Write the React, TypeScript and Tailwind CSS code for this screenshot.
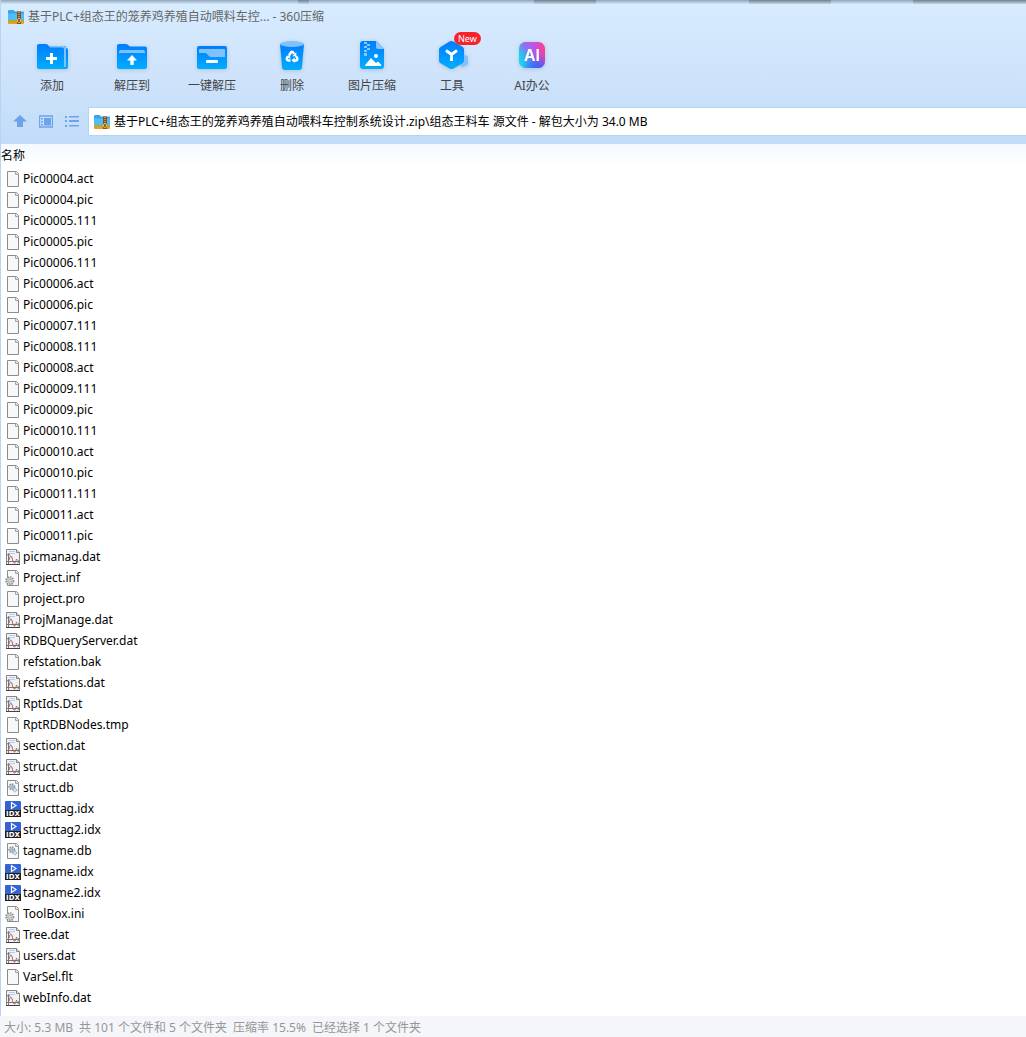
import { ReactNode, useState } from "react";

type FileKind = "blank" | "dat" | "conf" | "db" | "idx";

const files: { name: string; kind: FileKind }[] = [
  { name: "Pic00004.act", kind: "blank" },
  { name: "Pic00004.pic", kind: "blank" },
  { name: "Pic00005.111", kind: "blank" },
  { name: "Pic00005.pic", kind: "blank" },
  { name: "Pic00006.111", kind: "blank" },
  { name: "Pic00006.act", kind: "blank" },
  { name: "Pic00006.pic", kind: "blank" },
  { name: "Pic00007.111", kind: "blank" },
  { name: "Pic00008.111", kind: "blank" },
  { name: "Pic00008.act", kind: "blank" },
  { name: "Pic00009.111", kind: "blank" },
  { name: "Pic00009.pic", kind: "blank" },
  { name: "Pic00010.111", kind: "blank" },
  { name: "Pic00010.act", kind: "blank" },
  { name: "Pic00010.pic", kind: "blank" },
  { name: "Pic00011.111", kind: "blank" },
  { name: "Pic00011.act", kind: "blank" },
  { name: "Pic00011.pic", kind: "blank" },
  { name: "picmanag.dat", kind: "dat" },
  { name: "Project.inf", kind: "conf" },
  { name: "project.pro", kind: "blank" },
  { name: "ProjManage.dat", kind: "dat" },
  { name: "RDBQueryServer.dat", kind: "dat" },
  { name: "refstation.bak", kind: "blank" },
  { name: "refstations.dat", kind: "dat" },
  { name: "RptIds.Dat", kind: "dat" },
  { name: "RptRDBNodes.tmp", kind: "blank" },
  { name: "section.dat", kind: "dat" },
  { name: "struct.dat", kind: "dat" },
  { name: "struct.db", kind: "db" },
  { name: "structtag.idx", kind: "idx" },
  { name: "structtag2.idx", kind: "idx" },
  { name: "tagname.db", kind: "db" },
  { name: "tagname.idx", kind: "idx" },
  { name: "tagname2.idx", kind: "idx" },
  { name: "ToolBox.ini", kind: "conf" },
  { name: "Tree.dat", kind: "dat" },
  { name: "users.dat", kind: "dat" },
  { name: "VarSel.flt", kind: "blank" },
  { name: "webInfo.dat", kind: "dat" },
];

const Page = () => (
  <>
    <path d="M2.5 .5h9l2 2v13h-11z" fill="#f8f8f8" stroke="#8b8b8b" />
    <path d="M10.5 .5v3h3" fill="#ddd" stroke="#a5a5a5" />
  </>
);

const Gear = ({ cx, cy, r }: { cx: number; cy: number; r: number }) => (
  <>
    <circle cx={cx} cy={cy} r={r} fill="#e3e6e8" stroke="#8d9499" strokeWidth="1.6" strokeDasharray="1.6 .9" />
    <circle cx={cx} cy={cy} r={r - 1.2} fill="#dfe3e5" stroke="#9ba1a5" strokeWidth=".6" />
    <circle cx={cx} cy={cy} r={r / 3} fill="#fff" stroke="#858c90" strokeWidth=".7" />
  </>
);

const FileIcon = ({ kind }: { kind: FileKind }) => (
  <svg viewBox="0 0 16 16" className="h-4 w-4 shrink-0" aria-hidden="true">
    {kind === "blank" && <Page />}
    {kind === "dat" && (
      <>
        <path d="M1.5 .5h10l3 3v12h-13z" fill="#f1f2f4" stroke="#858585" />
        <path d="M11.5 .5v3h3" fill="#ddd" stroke="#858585" />
        <path d="M4 2.5h6M4 4.5h6" stroke="#b5cdf0" />
        <path d="M3.5 5v10M1.5 12.5h13M2 6.5l1.5-2 1.5 2M12.5 11l2 1.5-2 1.5" stroke="#777" fill="none" />
        <path d="M4 11C5 6 6.500 6 7.500 10.500S10.500 15.500 11.500 10" stroke="#a85a60" fill="none" />
        <path d="M1 15.500h14" stroke="#444" />
      </>
    )}
    {kind === "conf" && (
      <>
        <Page />
        <Gear cx={4.8} cy={10.8} r={3.8} />
      </>
    )}
    {kind === "db" && (
      <>
        <Page />
        <Gear cx={6.8} cy={6.8} r={2.7} />
        <circle cx="10" cy="10" r="1.800" fill="#cde5f3" stroke="#78abc9" strokeWidth="1" strokeDasharray="1.200 .6" />
      </>
    )}
    {kind === "idx" && (
      <>
        <rect width="16" height="16" rx="1" fill="#3464d4" />
        <path d="M6.500 1.500v6l4.500-3z" fill="#3464d4" stroke="#fff" strokeWidth="1.200" />
        <rect y="9" width="16" height="7" fill="#1c1c1c" />
        <text x="8" y="15" textAnchor="middle" fontSize="7" fontWeight="700" fill="#fff" fontFamily="DejaVu Sans, sans-serif">
          IDX
        </text>
      </>
    )}
  </svg>
);

const ZipIcon = () => (
  <svg viewBox="0 0 16 14" className="h-[14px] w-4 shrink-0" aria-hidden="true">
    <path d="M0 1q0-1 1-1h4.500l1.500 1.500h8q1 0 1 1V11H0z" fill="#36a5ec" />
    <path d="M0 3.500h16V10H0z" fill="#50bdf6" />
    <path d="M0 10h16v3q0 1-1 1H1q-1 0-1-1z" fill="#f39b1d" />
    <path d="M0 10.500h16v1H0z" fill="#6fbf3c" />
    <path d="M9 1.500h4V14H9z" fill="#84502a" />
    <path d="M11 2v7" stroke="#e6a74b" strokeWidth="1.400" strokeDasharray="1 1" />
    <rect x="9.700" y="8.700" width="2.600" height="3.600" rx=".6" fill="#6b3c1b" stroke="#ffd66b" />
  </svg>
);

const BlueGradient = ({ id }: { id: string }) => (
  <defs>
    <linearGradient id={id} x1="0" y1="0" x2="0" y2="1">
      <stop offset="0" stopColor="#007dff" />
      <stop offset="1" stopColor="#00adff" />
    </linearGradient>
  </defs>
);

const AddIcon = () => (
  <>
    <BlueGradient id="add" />
    <path d="M14 6h15q1 0 1 1v1q2 0 2 2v17q0 2-2 2H14z" fill="url(#add)" />
    <path d="M12 6h16q2 0 2 2v18q0 1-1 1h-3z" fill="#80c2ff" />
    <path d="M1 6q0-2 2-2h7q1 0 2 1l2 2.500h12q2 0 2 2V29H3q-2 0-2-2z" fill="url(#add)" />
    <path d="M14 13h3v4h4v3h-4v4h-3v-4h-4v-3h4z" fill="#fff" />
  </>
);

const ExtractIcon = () => (
  <>
    <BlueGradient id="extract" />
    <path d="M1 6q0-2 2-2h7q1 0 2 1l2 1.500h15q2 0 2 2V27q0 2-2 2H3q-2 0-2-2z" fill="url(#extract)" />
    <path d="M3 13v-1q0-2 2-2h22q2 0 2 2v1z" fill="#80c2ff" />
    <path d="M16 15l5 5.500h-3.300V25h-3.400v-4.500H11z" fill="#fff" />
  </>
);

const OneKeyIcon = () => (
  <>
    <BlueGradient id="onekey" />
    <rect x="1" y="6" width="30" height="23" rx="2" fill="url(#onekey)" />
    <path d="M3 10q0-1 1-1h24q1 0 1 1v7H15q-1 0-2-1l-3-3H3z" fill="#80c2ff" />
    <rect x="10" y="20" width="12" height="3" rx="1" fill="#fff" />
  </>
);

const DeleteIcon = () => (
  <>
    <BlueGradient id="trash" />
    <path d="M4 4h24l-2 23q0 3-3 3H9q-3 0-3-3z" fill="url(#trash)" />
    <ellipse cx="16" cy="4" rx="12" ry="3" fill="#80c2ff" />
    <g fill="none" stroke="#fff" strokeWidth="2.400">
      <path d="M13 15.500l2-3.200q1-1.200 2 0l1 1.600" />
      <path d="M20 16l1.300 2.300q.6 2-1.300 2.200h-2.500" />
      <path d="M14.500 20.500h-2.300q-2-.4-1.300-2.200l.9-1.600" />
    </g>
    <path d="M20.300 12v4.200h-4zM18.500 17.500v5.500l-3-2.700zM10 16l4-.8.3 3.800z" fill="#fff" />
  </>
);

const ImageZipIcon = () => (
  <>
    <BlueGradient id="imgzip" />
    <path d="M4 4q0-3 3-3h13l8 8v17q0 3-3 3H7q-3 0-3-3z" fill="url(#imgzip)" />
    <path d="M20 1l8 8h-6q-2 0-2-2z" fill="#8ac8ff" />
    <path d="M8 2h3v2H8zM11 4h3v2h-3zM8 6h3v2H8zM11 8h3v2h-3zM8 10h3v2H8zM8 13h3v3H8z" fill="#8ac8ff" />
    <circle cx="20" cy="16" r="2" fill="#fff" />
    <path d="M9 26q0-1 1-2l5-6 5 5 2-1.500 3 3q.6 1 0 1.500z" fill="#fff" />
  </>
);

const ToolsIcon = () => (
  <>
    <BlueGradient id="tools" />
    <path d="M27 14l5 2.500v8L27 27l-6-3z" fill="#80c2ff" />
    <path d="M15.500 1q1 0 2 .5l9 5.300q1.500 1 1.500 2.500v11.500q0 1.500-1.500 2.400l-9 5.300q-2 1-4 0l-9-5.300Q3 22.500 3 21V9.300Q3 8 4.500 7l9-5.500q1-.5 2-.5z" fill="url(#tools)" />
    <path d="M10 10.500l5.500 4 5.500-4M15.500 14.500V21" fill="none" stroke="#fff" strokeWidth="2.800" />
  </>
);

const AiIcon = () => (
  <>
    <defs>
      <linearGradient id="ai" x1="0" y1=".6" x2="1" y2=".3">
        <stop offset="0" stopColor="#14d8ef" />
        <stop offset=".35" stopColor="#5b91ee" />
        <stop offset=".65" stopColor="#c44de0" />
        <stop offset="1" stopColor="#fa4190" />
      </linearGradient>
      <radialGradient id="aiBlue" cx=".75" cy="1.1" r=".65">
        <stop offset="0" stopColor="#1d62ff" />
        <stop offset="1" stopColor="#1d62ff" stopOpacity="0" />
      </radialGradient>
      <radialGradient id="aiViolet" cx=".35" cy="0" r=".5">
        <stop offset="0" stopColor="#b45cf0" />
        <stop offset="1" stopColor="#b45cf0" stopOpacity="0" />
      </radialGradient>
    </defs>
    <rect x="3" y="2" width="26" height="26" rx="6.500" fill="url(#ai)" />
    <rect x="3" y="2" width="26" height="26" rx="6.500" fill="url(#aiBlue)" />
    <rect x="3" y="2" width="26" height="26" rx="6.500" fill="url(#aiViolet)" />
    <text x="16" y="21" textAnchor="middle" fontSize="16" fontWeight="700" fill="#fff" fontFamily="Liberation Sans, sans-serif">
      AI
    </text>
  </>
);

const tools: { label: string; icon: ReactNode; badge?: string }[] = [
  { label: "添加", icon: <AddIcon /> },
  { label: "解压到", icon: <ExtractIcon /> },
  { label: "一键解压", icon: <OneKeyIcon /> },
  { label: "删除", icon: <DeleteIcon /> },
  { label: "图片压缩", icon: <ImageZipIcon /> },
  { label: "工具", icon: <ToolsIcon />, badge: "New" },
  { label: "AI办公", icon: <AiIcon /> },
];

const App = () => {
  const [path, setPath] = useState(
    "基于PLC+组态王的笼养鸡养殖自动喂料车控制系统设计.zip\\组态王料车 源文件 - 解包大小为 34.0 MB"
  );

  return (
    <div className="flex min-h-screen flex-col bg-white font-['Noto_Sans','Noto_Sans_CJK_SC',sans-serif] text-xs text-black">
      <header className="border-l border-[#b9d4f2] bg-linear-to-b from-[#d7ecff] via-[#cfe4fb] to-[#c1dcf8]">
        {/* shadow of the windows behind the title bar */}
        <div className="flex h-1 bg-linear-to-b from-[#8fa4b8] to-[#d3e8fb]">
          <div className="w-[29%]" />
          <div className="w-[1%] bg-linear-to-b from-[#6f7f90] to-[#c3d8ea]" />
          <div className="w-[22%]" />
          <div className="w-[6%] bg-linear-to-b from-[#6f7f90] to-[#c3d8ea]" />
          <div className="w-[15%]" />
          <div className="w-[8%] bg-linear-to-b from-[#6f7f90] to-[#c3d8ea]" />
          <div className="w-[8%]" />
          <div className="flex-1 bg-linear-to-b from-[#6f7f90] to-[#c3d8ea]" />
        </div>
        <div className="flex h-[26px] items-center gap-1 pl-[7px] text-[#666]">
          <ZipIcon />
          <h1>基于PLC+组态王的笼养鸡养殖自动喂料车控... - 360压缩</h1>
        </div>

        <nav className="flex h-[77px] pt-[10px] pl-[11px]">
          {tools.map((tool) => (
            <button key={tool.label} className="flex h-14 w-20 flex-col items-center text-[#444]">
              <span className="relative">
                <svg viewBox="0 0 32 32" className="h-8 w-8 drop-shadow-sm" aria-hidden="true">
                  {tool.icon}
                </svg>
                {tool.badge && (
                  <span className="absolute -top-2 left-[18px] rounded-full bg-[#f8222c] px-1 text-[9px] leading-[13px] text-white">
                    {tool.badge}
                  </span>
                )}
              </span>
              <span className="mt-1 leading-5">{tool.label}</span>
            </button>
          ))}
        </nav>

        <div className="flex items-center pb-2 pl-3">
          <div className="flex gap-3 pr-[9px] text-[#6da3ea]">
            <button aria-label="向上">
              <svg viewBox="0 0 14 14" className="h-[14px] w-[14px]" fill="currentColor">
                <path d="M7 0l7 6.500h-4V12H4V6.500H0z" />
              </svg>
            </button>
            <button aria-label="预览">
              <svg viewBox="0 0 14 14" className="h-[14px] w-[14px]" fill="currentColor">
                <path d="M.5 1h13v11H.5z" fill="none" stroke="currentColor" strokeWidth="1.300" />
                <path d="M2 3h2v1.500H2zM2 6h2v1.500H2zM2 9h2v1.500H2zM5 3h7v7.500H5z" />
              </svg>
            </button>
            <button aria-label="列表">
              <svg viewBox="0 0 14 14" className="h-[14px] w-[14px]" fill="currentColor">
                <path d="M0 1h2v2H0zM0 5h2v2H0zM0 10h2v2H0zM4 1h10v1.500H4zM4 5h10v2H4zM4 10h10v1.500H4z" />
              </svg>
            </button>
          </div>
          <div className="flex h-[29px] flex-1 items-center gap-1 border border-r-0 border-[#b5d4f3] bg-white pl-[5px]">
            <ZipIcon />
            <input
              type="text"
              aria-label="路径"
              value={path}
              onChange={(e) => setPath(e.target.value)}
              className="min-w-0 flex-1 bg-transparent outline-none"
            />
          </div>
        </div>
      </header>

      <main className="flex-1 border-l border-[#b9d4f2] pb-2">
        <table className="w-full border-collapse text-left">
          <thead>
            <tr className="h-6 bg-linear-to-b from-[#f4f9ff] to-white">
              <th className="p-0 font-normal">名称</th>
            </tr>
          </thead>
          <tbody>
            {files.map((file) => (
              <tr key={file.name} className="h-[21px]">
                <td className="p-0 pl-1">
                  <div className="flex items-center gap-[2px] leading-5">
                    <FileIcon kind={file.kind} />
                    {file.name}
                  </div>
                </td>
              </tr>
            ))}
          </tbody>
        </table>
      </main>

      <footer className="flex gap-[6px] bg-[#f4f6fa] px-1 pt-[2px] leading-[19px] text-[#969696]">
        <span>大小: 5.3 MB</span>
        <span>共 101 个文件和 5 个文件夹</span>
        <span>压缩率 15.5%</span>
        <span>已经选择 1 个文件夹</span>
      </footer>
    </div>
  );
};

export default App;
